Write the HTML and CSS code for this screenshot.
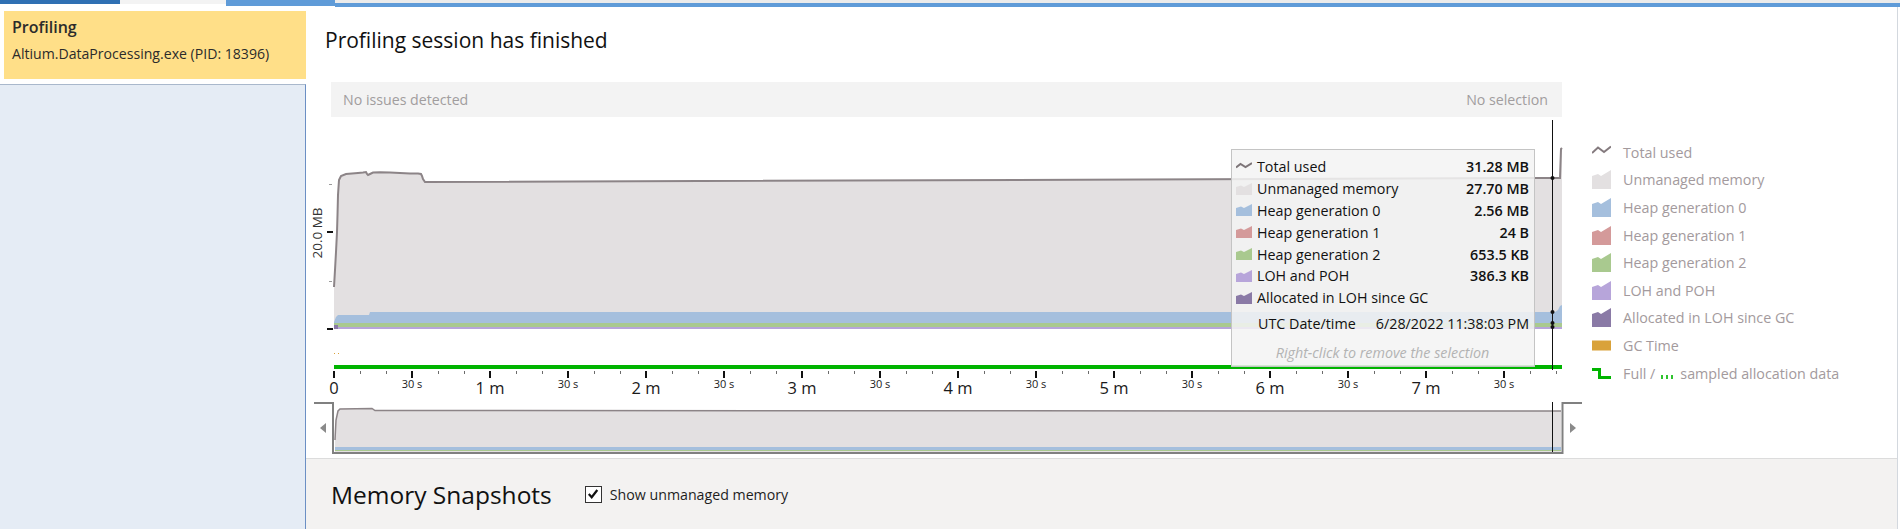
FILE: index.html
```html
<!DOCTYPE html>
<html lang="en">
<head>
<meta charset="utf-8">
<title>Profiling session</title>
<link rel="stylesheet" href="styles.css">
</head>
<body>
<div class="tabs">
  <div class="tab tab-active"></div>
  <div class="tab tab-light"></div>
  <div class="tab tab-blue"></div>
  <div class="tab tab-rest"></div>
</div>
<div class="app">
  <aside class="side">
    <div class="session-card">
      <div class="session-title">Profiling</div>
      <div class="session-proc">Altium.DataProcessing.exe (PID: 18396)</div>
    </div>
    <div class="side-list"></div>
  </aside>
  <main class="main">
    <section class="overview">
      <h1 class="title">Profiling session has finished</h1>
      <div class="chart-row">
        <div class="chart-col">
          <div class="issues"><span>No issues detected</span><span>No selection</span></div>
          <svg class="chart" width="1284" height="341" viewBox="306 117 1284 341" xmlns="http://www.w3.org/2000/svg">
            <defs>
              <pattern id="minor" x="334" y="371" width="26" height="4" patternUnits="userSpaceOnUse">
                <rect x="0" y="0" width="1" height="4" fill="#6b6b6b"/>
              </pattern>
            </defs>
            <!-- y axis -->
            <text class="ylab" x="317" y="233" transform="rotate(-90 317 233)">20.0 MB</text>
            <rect x="329" y="184" width="3" height="1" fill="#9a9a9a"/>
            <rect x="327" y="231" width="6" height="2" fill="#111"/>
            <rect x="329" y="281" width="3" height="1" fill="#9a9a9a"/>
            <rect x="327" y="328" width="6" height="2" fill="#111"/>
            <!-- main area -->
            <path d="M334,329 L334,287 L335,270 L336,252 L337,232 L337.5,215 L338,195 L339,180 L341,176 L346,174 L352,173.5 L358,173 L363,172.5 L366,172 L367,174 L368,175 L370,174 L373,172.5 L380,172.3 L390,172.5 L400,173 L410,173.5 L418,173.5 L421,174 L422,176 L423,179 L425,182 L1553,178 L1560,178 L1561,149 L1562,148 L1562,329 Z" fill="#e3e0e1"/>
            <path d="M334,287 L335,270 L336,252 L337,232 L337.5,215 L338,195 L339,180 L341,176 L346,174 L352,173.5 L358,173 L363,172.5 L366,172 L367,174 L368,175 L370,174 L373,172.5 L380,172.3 L390,172.5 L400,173 L410,173.5 L418,173.5 L421,174 L422,176 L423,179 L425,182 L1553,178 L1560,178 L1561,149 L1562,148" fill="none" stroke="#8c8487" stroke-width="2"/>
            <path d="M334,329 L334,322 L336,317 L338,315 L369,315 L370,312 L1555,312 L1558,310 L1560,306 L1562,305 L1562,329 Z" fill="#a5bfdd"/>
            <rect x="334" y="323" width="1228" height="4" fill="#a9c98f"/>
            <rect x="334" y="327" width="1228" height="2" fill="#b7a5da"/>
            <rect x="334" y="325" width="4" height="4" fill="#8a7aa6"/>
            <!-- gc marks -->
            <rect x="334" y="353" width="1" height="1" fill="#d9a23a"/>
            <rect x="338" y="353" width="1" height="1" fill="#d9a23a"/>
            <!-- allocation data line -->
            <rect x="334" y="365" width="1228" height="4" fill="#00b400"/>
            <!-- selection line -->
            <line x1="1552.5" y1="120" x2="1552.5" y2="370" stroke="#111" stroke-width="1"/>
            <circle cx="1552.5" cy="178" r="2" fill="#111"/>
            <circle cx="1552.5" cy="312" r="2" fill="#111"/>
            <circle cx="1552.5" cy="323" r="2" fill="#111"/>
            <circle cx="1552.5" cy="327" r="2" fill="#111"/>
            <!-- time axis -->
            <rect x="334" y="371" width="1228" height="3" fill="url(#minor)"/>
            <g fill="#111">
              <rect x="333" y="371" width="2" height="7"/>
              <rect x="411" y="371" width="2" height="7"/>
              <rect x="489" y="371" width="2" height="7"/>
              <rect x="567" y="371" width="2" height="7"/>
              <rect x="645" y="371" width="2" height="7"/>
              <rect x="723" y="371" width="2" height="7"/>
              <rect x="801" y="371" width="2" height="7"/>
              <rect x="879" y="371" width="2" height="7"/>
              <rect x="957" y="371" width="2" height="7"/>
              <rect x="1035" y="371" width="2" height="7"/>
              <rect x="1113" y="371" width="2" height="7"/>
              <rect x="1191" y="371" width="2" height="7"/>
              <rect x="1269" y="371" width="2" height="7"/>
              <rect x="1347" y="371" width="2" height="7"/>
              <rect x="1425" y="371" width="2" height="7"/>
              <rect x="1503" y="371" width="2" height="7"/>
            </g>
            <g class="tl-big">
              <text x="334" y="394">0</text>
              <text x="490" y="394">1 m</text>
              <text x="646" y="394">2 m</text>
              <text x="802" y="394">3 m</text>
              <text x="958" y="394">4 m</text>
              <text x="1114" y="394">5 m</text>
              <text x="1270" y="394">6 m</text>
              <text x="1426" y="394">7 m</text>
            </g>
            <g class="tl-small">
              <text x="412" y="388">30 s</text>
              <text x="568" y="388">30 s</text>
              <text x="724" y="388">30 s</text>
              <text x="880" y="388">30 s</text>
              <text x="1036" y="388">30 s</text>
              <text x="1192" y="388">30 s</text>
              <text x="1348" y="388">30 s</text>
              <text x="1504" y="388">30 s</text>
            </g>
            <!-- overview strip -->
            <path d="M335,452 L335,440 L336,420 L338,411 L340,409 L372,408.5 L375,410.5 L1561,411 L1561,452 Z" fill="#e3e0e1"/>
            <path d="M335,440 L336,420 L338,411 L340,409 L372,408.5 L375,410.5 L1561,411" fill="none" stroke="#8c8487" stroke-width="1.5"/>
            <rect x="335" y="447" width="1226" height="3" fill="#a5bfdd"/>
            <rect x="335" y="450" width="1226" height="1" fill="#a9c98f"/>
            <line x1="1552.5" y1="402" x2="1552.5" y2="452" stroke="#111" stroke-width="1"/>
            <path d="M314,403 H333 V453 H1562.5 V403 H1582" fill="none" stroke="#808080" stroke-width="2"/>
            <polygon points="326,423 320,428 326,433" fill="#8a8a8a"/>
            <polygon points="1570,423 1576,428 1570,433" fill="#8a8a8a"/>
          </svg>
          <div class="tooltip">
            <div class="tip-row">
              <svg class="tip-ico" width="16" height="12" viewBox="0 0 16 12"><polyline points="0,6.5 4.5,3 9.5,6 16,2" fill="none" stroke="#7d7578" stroke-width="2"/></svg>
              <span class="tip-label">Total used</span><span class="tip-val">31.28 MB</span>
            </div>
            <div class="tip-row">
              <svg class="tip-ico" width="16" height="12" viewBox="0 0 16 12"><path d="M0,12 V4 L5,2.5 L8,4 L16,0 V12 Z" fill="#e3e0e1"/></svg>
              <span class="tip-label">Unmanaged memory</span><span class="tip-val">27.70 MB</span>
            </div>
            <div class="tip-row">
              <svg class="tip-ico" width="16" height="12" viewBox="0 0 16 12"><path d="M0,12 V4 L5,2.5 L8,4 L16,0 V12 Z" fill="#a5bfdd"/></svg>
              <span class="tip-label">Heap generation 0</span><span class="tip-val">2.56 MB</span>
            </div>
            <div class="tip-row">
              <svg class="tip-ico" width="16" height="12" viewBox="0 0 16 12"><path d="M0,12 V4 L5,2.5 L8,4 L16,0 V12 Z" fill="#d49a9a"/></svg>
              <span class="tip-label">Heap generation 1</span><span class="tip-val">24 B</span>
            </div>
            <div class="tip-row">
              <svg class="tip-ico" width="16" height="12" viewBox="0 0 16 12"><path d="M0,12 V4 L5,2.5 L8,4 L16,0 V12 Z" fill="#a9c98f"/></svg>
              <span class="tip-label">Heap generation 2</span><span class="tip-val">653.5 KB</span>
            </div>
            <div class="tip-row">
              <svg class="tip-ico" width="16" height="12" viewBox="0 0 16 12"><path d="M0,12 V4 L5,2.5 L8,4 L16,0 V12 Z" fill="#b7a5da"/></svg>
              <span class="tip-label">LOH and POH</span><span class="tip-val">386.3 KB</span>
            </div>
            <div class="tip-row">
              <svg class="tip-ico" width="16" height="12" viewBox="0 0 16 12"><path d="M0,12 V4 L5,2.5 L8,4 L16,0 V12 Z" fill="#8a7aa6"/></svg>
              <span class="tip-label">Allocated in LOH since GC</span><span class="tip-val"></span>
            </div>
            <div class="tip-row tip-time">
              <span class="tip-label">UTC Date/time</span><span class="tip-val">6/28/2022 11:38:03 PM</span>
            </div>
            <div class="tip-hint">Right-click to remove the selection</div>
          </div>
        </div>
        <ul class="legend">
          <li><svg class="lg-ico" width="19" height="19" viewBox="0 0 19 19"><polyline points="0,10 6,4.5 12,9 19,3.5" fill="none" stroke="#847a7e" stroke-width="2"/></svg>Total used</li>
          <li><svg class="lg-ico" width="19" height="19" viewBox="0 0 19 19"><path d="M0,19 V6 L6,4 L9,6 L19,0 V19 Z" fill="#e3e0e1"/></svg>Unmanaged memory</li>
          <li><svg class="lg-ico" width="19" height="19" viewBox="0 0 19 19"><path d="M0,19 V6 L6,4 L9,6 L19,0 V19 Z" fill="#a5bfdd"/></svg>Heap generation 0</li>
          <li><svg class="lg-ico" width="19" height="19" viewBox="0 0 19 19"><path d="M0,19 V6 L6,4 L9,6 L19,0 V19 Z" fill="#d49a9a"/></svg>Heap generation 1</li>
          <li><svg class="lg-ico" width="19" height="19" viewBox="0 0 19 19"><path d="M0,19 V6 L6,4 L9,6 L19,0 V19 Z" fill="#a9c98f"/></svg>Heap generation 2</li>
          <li><svg class="lg-ico" width="19" height="19" viewBox="0 0 19 19"><path d="M0,19 V6 L6,4 L9,6 L19,0 V19 Z" fill="#b7a5da"/></svg>LOH and POH</li>
          <li><svg class="lg-ico" width="19" height="19" viewBox="0 0 19 19"><path d="M0,19 V6 L6,4 L9,6 L19,0 V19 Z" fill="#8a7aa6"/></svg>Allocated in LOH since GC</li>
          <li><svg class="lg-ico" width="19" height="19" viewBox="0 0 19 19"><rect x="0" y="4.5" width="19" height="10" fill="#d9a23a"/></svg>GC Time</li>
          <li><svg class="lg-ico" width="19" height="19" viewBox="0 0 19 19"><path d="M0,5.5 H7.5 V13.5 H19" fill="none" stroke="#00b400" stroke-width="3"/></svg>Full /<svg class="dots" width="14" height="19" viewBox="0 0 14 19"><rect x="1" y="11" width="2" height="4" fill="#2fc42f"/><rect x="6" y="11" width="2" height="4" fill="#2fc42f"/><rect x="11" y="11" width="2" height="4" fill="#2fc42f"/></svg>sampled allocation data</li>
        </ul>
      </div>
    </section>
    <section class="snapshots">
      <h2 class="snap-title">Memory Snapshots</h2>
      <label class="check">
        <span class="check-box"><svg width="14" height="14" viewBox="0 0 14 14"><path d="M2.8,7 L5.7,10.2 L11.3,3" fill="none" stroke="#111" stroke-width="2.2"/></svg></span>
        Show unmanaged memory
      </label>
    </section>
  </main>
</div>
</body>
</html>
```

FILE: styles.css
```css
* { box-sizing: border-box; }

html, body {
  margin: 0;
  padding: 0;
  width: 1900px;
  height: 529px;
  overflow: hidden;
  background: #ffffff;
  font-family: "Open Sans", "Noto Sans", "Liberation Sans", sans-serif;
  color: #1e1e1e;
}

.tabs {
  display: flex;
  height: 7px;
}
.tab { height: 7px; }
.tab-active {
  width: 120px;
  background: linear-gradient(#2f70b3 0 4px, #ffffff 4px);
}
.tab-light {
  width: 106px;
  background: linear-gradient(#f3f3f3 0 4px, #ffffff 4px);
}
.tab-blue {
  width: 109px;
  background: linear-gradient(#5f9bd8 0 6px, #ffffff 6px);
}
.tab-rest {
  flex: 1;
  background: linear-gradient(#ebebeb 0 3px, #5f9bd8 3px 7px);
}

.app {
  display: flex;
  height: 522px;
}

.side {
  width: 306px;
  display: flex;
  flex-direction: column;
  background: #ffffff;
}
.session-card {
  margin: 4px 0 5px 4px;
  height: 68px;
  background: #ffdf88;
  padding: 5px 0 0 8px;
  color: #2b2b2b;
}
.session-title {
  font-size: 16px;
  font-weight: 600;
  line-height: 23px;
}
.session-proc {
  font-size: 14.1px;
  line-height: 20px;
  margin-top: 5px;
}
.side-list {
  flex: 1;
  background: #e5ecf5;
  border-top: 1px solid #a9b8cc;
  border-right: 1px solid #6b8fc4;
}

.main {
  flex: 1;
  display: flex;
  flex-direction: column;
  border-right: 1px solid #d3d8de;
  margin-right: 2px;
}

.overview {
  height: 451px;
  background: #ffffff;
}
.title {
  margin: 19px 0 0 19px;
  font-size: 21px;
  line-height: 28px;
  font-weight: 400;
  color: #111;
}

.chart-row {
  display: flex;
  margin-top: 28px;
}
.chart-col {
  position: relative;
  width: 1284px;
  flex: none;
}
.issues {
  margin-left: 25px;
  width: 1231px;
  height: 35px;
  background: #f3f3f3;
  padding: 0 14px 0 12px;
  display: flex;
  justify-content: space-between;
  align-items: center;
  font-size: 14.2px;
  color: #a19d9e;
}
.chart {
  display: block;
  font-family: "Open Sans", "Noto Sans", "Liberation Sans", sans-serif;
}
.ylab {
  font-size: 13.5px;
  fill: #333;
  text-anchor: middle;
  dominant-baseline: central;
}
.tl-big text {
  font-size: 16.5px;
  fill: #1a1a1a;
  text-anchor: middle;
}
.tl-small text {
  font-size: 11px;
  fill: #1a1a1a;
  text-anchor: middle;
}

.tooltip {
  position: absolute;
  left: 925px;
  top: 67px;
  width: 304px;
  height: 218px;
  background: rgba(243, 243, 243, 0.86);
  border: 1px solid #c4c4c4;
  padding: 6px 5px 0 4px;
  font-size: 14.3px;
  color: #111;
}
.tip-row {
  display: flex;
  align-items: center;
  height: 21.8px;
}
.tip-ico {
  flex: none;
  margin-right: 5px;
}
.tip-label { flex: 1; white-space: nowrap; }
.tip-val { white-space: nowrap; font-weight: 600; }
.tip-time {
  margin-top: 4.4px;
  padding-left: 22px;
  font-size: 14.3px;
}
.tip-time .tip-val { font-weight: 500; }
.tip-hint {
  margin-top: 7px;
  height: 22px;
  line-height: 22px;
  text-align: center;
  font-style: italic;
  color: #b3b3b3;
  font-size: 14.3px;
}

.legend {
  list-style: none;
  margin: 0 0 0 2px;
  padding: 56.5px 0 0 0;
}
.legend li {
  display: flex;
  align-items: center;
  height: 27.6px;
  font-size: 14.3px;
  color: #a39a9d;
  white-space: nowrap;
}
.lg-ico {
  flex: none;
  margin-right: 12px;
}
.dots {
  flex: none;
  margin: 0 6px 0 5px;
}

.snapshots {
  flex: 1;
  display: flex;
  align-items: center;
  padding-left: 25px;
  background: #f3f2f1;
  border-top: 1px solid #dcdcdc;
}
.snap-title {
  margin: 0;
  font-size: 24.5px;
  font-weight: 400;
  color: #111;
}
.check {
  display: flex;
  align-items: center;
  margin-left: 33px;
  font-size: 14.2px;
  color: #1e1e1e;
}
.check-box {
  width: 17px;
  height: 17px;
  border: 1px solid #333;
  background: #ffffff;
  display: flex;
  align-items: center;
  justify-content: center;
  margin-right: 8px;
}
```
